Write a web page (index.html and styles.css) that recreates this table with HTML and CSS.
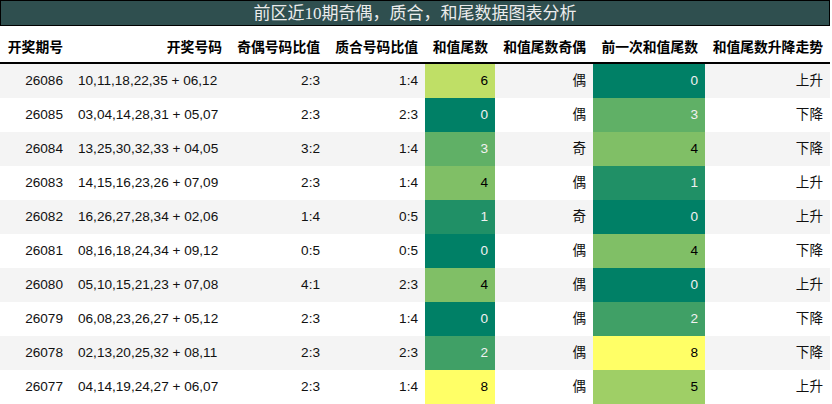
FILE: index.html
```html
<!DOCTYPE html>
<html lang="zh">
<head>
<meta charset="utf-8">
<title>前区近10期奇偶，质合，和尾数据图表分析</title>
<link rel="stylesheet" href="styles.css">
</head>
<body>
<div class="wrap">
  <div class="title">前区近10期奇偶，质合，和尾数据图表分析</div>
  <table class="data">
    <colgroup>
      <col class="c1"><col class="c2"><col class="c3"><col class="c4">
      <col class="c5"><col class="c6"><col class="c7"><col class="c8">
    </colgroup>
    <thead>
      <tr>
        <th>开奖期号</th><th>开奖号码</th><th>奇偶号码比值</th><th>质合号码比值</th>
        <th>和值尾数</th><th>和值尾数奇偶</th><th>前一次和值尾数</th><th>和值尾数升降走势</th>
      </tr>
    </thead>
    <tbody>
      <tr><td>26086</td><td class="nums">10,11,18,22,35 + 06,12</td><td>2:3</td><td>1:4</td><td class="v6">6</td><td>偶</td><td class="v0">0</td><td>上升</td></tr>
      <tr><td>26085</td><td class="nums">03,04,14,28,31 + 05,07</td><td>2:3</td><td>2:3</td><td class="v0">0</td><td>偶</td><td class="v3">3</td><td>下降</td></tr>
      <tr><td>26084</td><td class="nums">13,25,30,32,33 + 04,05</td><td>3:2</td><td>1:4</td><td class="v3">3</td><td>奇</td><td class="v4">4</td><td>下降</td></tr>
      <tr><td>26083</td><td class="nums">14,15,16,23,26 + 07,09</td><td>2:3</td><td>1:4</td><td class="v4">4</td><td>偶</td><td class="v1">1</td><td>上升</td></tr>
      <tr><td>26082</td><td class="nums">16,26,27,28,34 + 02,06</td><td>1:4</td><td>0:5</td><td class="v1">1</td><td>奇</td><td class="v0">0</td><td>上升</td></tr>
      <tr><td>26081</td><td class="nums">08,16,18,24,34 + 09,12</td><td>0:5</td><td>0:5</td><td class="v0">0</td><td>偶</td><td class="v4">4</td><td>下降</td></tr>
      <tr><td>26080</td><td class="nums">05,10,15,21,23 + 07,08</td><td>4:1</td><td>2:3</td><td class="v4">4</td><td>偶</td><td class="v0">0</td><td>上升</td></tr>
      <tr><td>26079</td><td class="nums">06,08,23,26,27 + 05,12</td><td>2:3</td><td>1:4</td><td class="v0">0</td><td>偶</td><td class="v2">2</td><td>下降</td></tr>
      <tr><td>26078</td><td class="nums">02,13,20,25,32 + 08,11</td><td>2:3</td><td>2:3</td><td class="v2">2</td><td>偶</td><td class="v8">8</td><td>下降</td></tr>
      <tr><td>26077</td><td class="nums">04,14,19,24,27 + 06,07</td><td>2:3</td><td>1:4</td><td class="v8">8</td><td>偶</td><td class="v5">5</td><td>上升</td></tr>
    </tbody>
  </table>
</div>
</body>
</html>
```
FILE: styles.css
```css
html, body {
  margin: 0;
  padding: 0;
  background: #ffffff;
}

.wrap {
  width: 830px;
}

.title {
  box-sizing: border-box;
  height: 26px;
  border: 1px solid #000;
  background: #2f4f4f;
  color: #ececec;
  font-family: "Liberation Serif", "Noto Sans CJK SC", serif;
  font-size: 17px;
  line-height: 24px;
  padding-top: 1px;
  text-align: center;
}

.data {
  width: 830px;
  border-collapse: collapse;
  table-layout: fixed;
  font-family: "Liberation Sans", "Noto Sans CJK SC", sans-serif;
  font-size: 13.6px;
  color: #111;
}

.c1 { width: 70px; }
.c2 { width: 159px; }
.c3 { width: 98px; }
.c4 { width: 98px; }
.c5 { width: 70px; }
.c6 { width: 98px; }
.c7 { width: 112px; }
.c8 { width: 125px; }

.data th {
  box-sizing: border-box;
  height: 37px;
  padding: 7px 7px 0 0;
  text-align: right;
  font-weight: bold;
  font-size: 13.8px;
  line-height: 28px;
  color: #000;
  border-bottom: 2px solid #000;
  white-space: nowrap;
}

.data td {
  box-sizing: border-box;
  height: 34px;
  padding: 0 7px 0 0;
  text-align: right;
  line-height: 34px;
  white-space: nowrap;
}

.data td.nums {
  text-align: left;
  padding-left: 8px;
}

.data tbody tr:nth-child(odd) { background: #f4f4f4; }
.data tbody tr:nth-child(even) { background: #ffffff; }
.data tbody tr:last-child td { border-bottom: 1px solid #eeeeee; height: 35px; line-height: 34px; }

.v0 { background: #008066; color: #f1f1f1; }
.v1 { background: #209066; color: #f1f1f1; }
.v2 { background: #40a066; color: #f1f1f1; }
.v3 { background: #60b066; color: #f1f1f1; }
.v4 { background: #80bf66; color: #000; }
.v5 { background: #9fcf66; color: #000; }
.v6 { background: #bfdf66; color: #000; }
.v8 { background: #ffff66; color: #000; }
```
